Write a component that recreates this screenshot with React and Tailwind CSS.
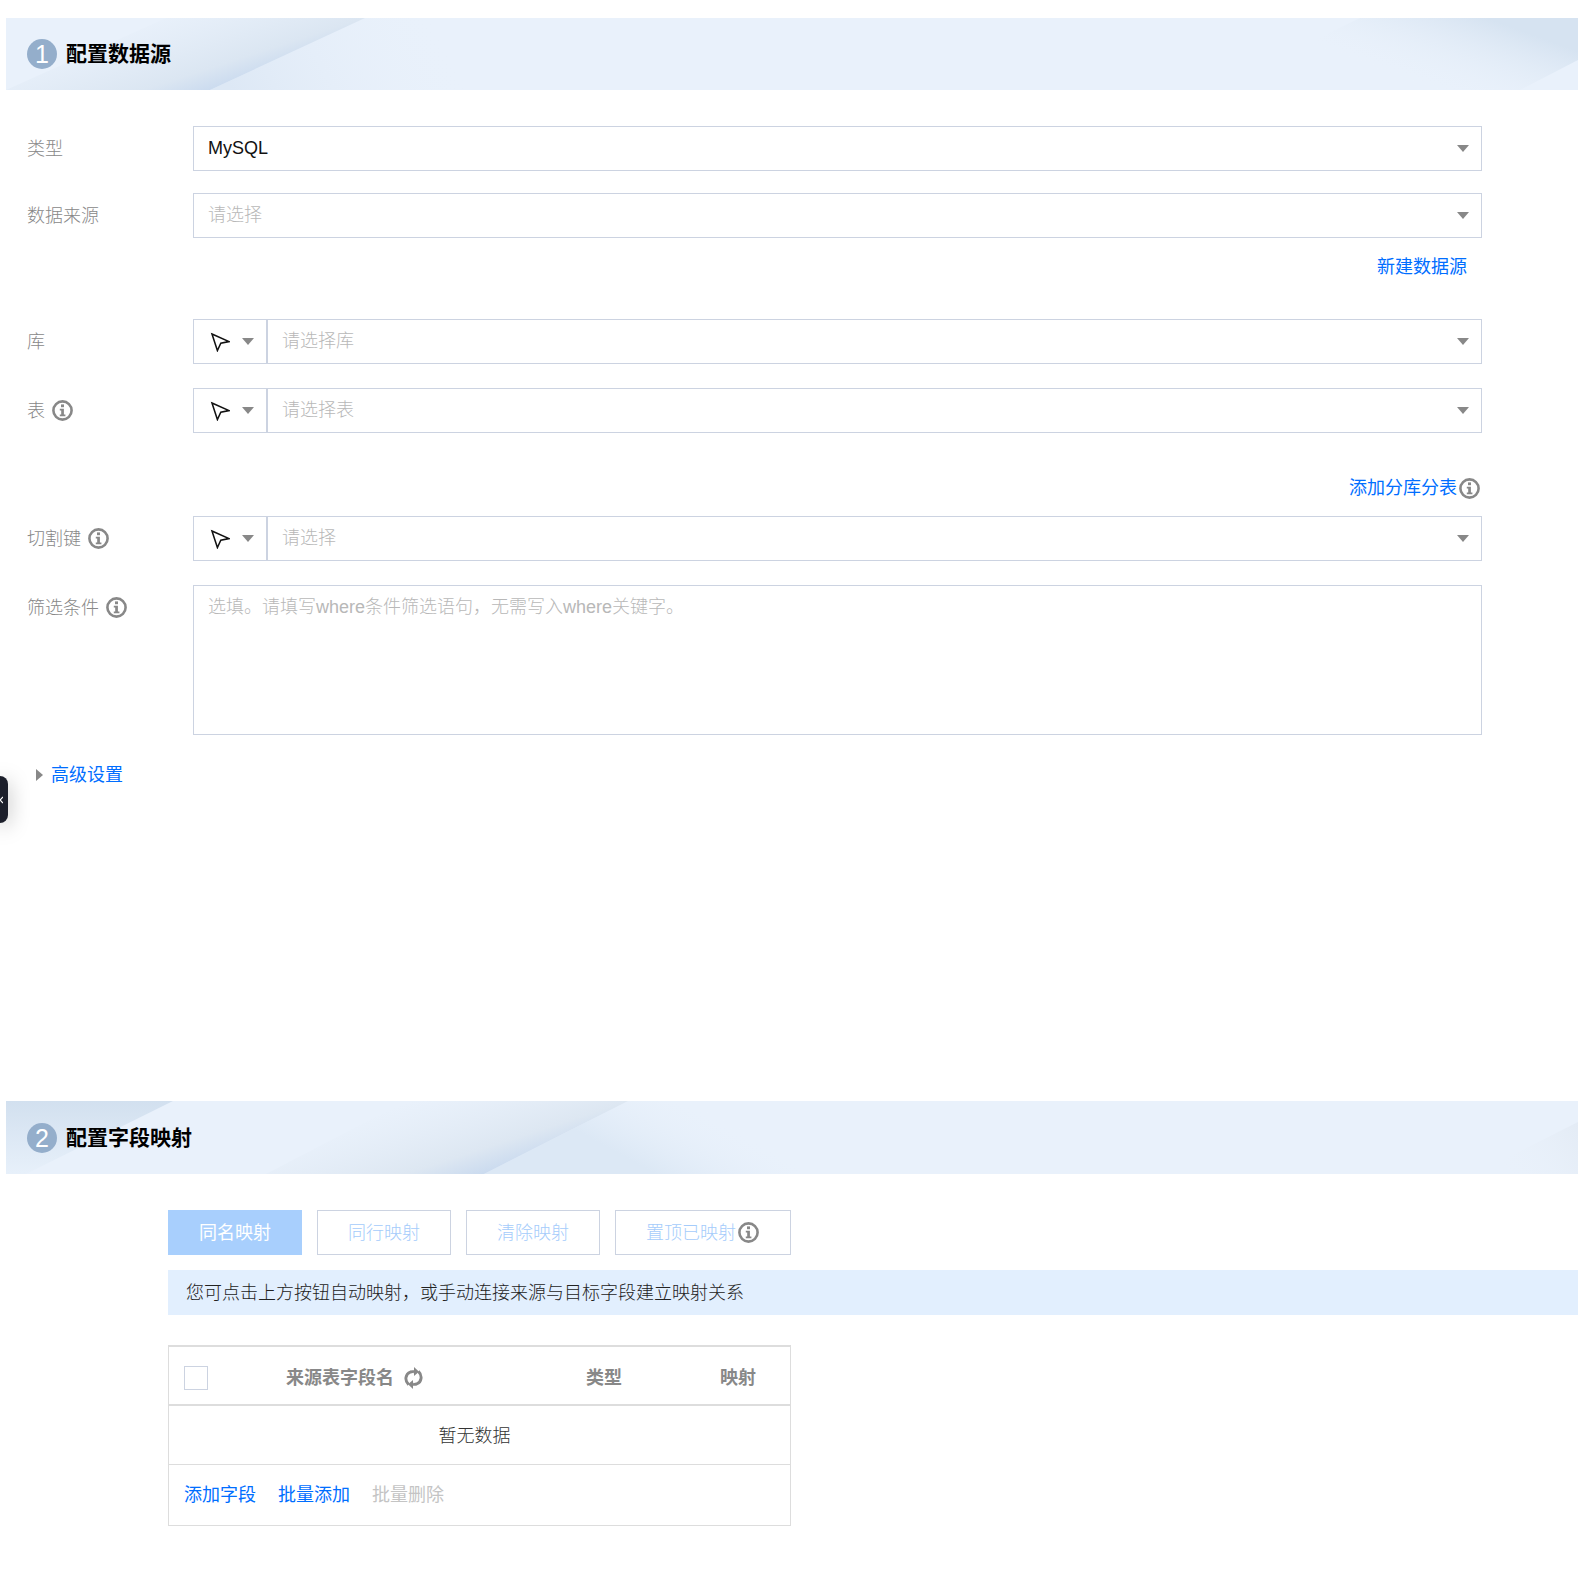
import React from "react";

function Caret({ className = "" }) {
  return (
    <svg width="12" height="7" viewBox="0 0 12 7" className={className}>
      <path d="M0 0H12L6 7Z" fill="#888888" />
    </svg>
  );
}

function Info() {
  return (
    <svg width="21" height="21" viewBox="0 0 21 21" className="shrink-0">
      <circle cx="10.5" cy="10.5" r="9.1" fill="none" stroke="#888888" strokeWidth="2.6" />
      <rect x="9" y="4.4" width="3" height="2.8" fill="#888888" />
      <path d="M7.8 8.8H11.9V14.6H13.4V16.2H7.8V14.6H9.2V10.4H7.8Z" fill="#888888" />
    </svg>
  );
}

function Pointer() {
  return (
    <svg width="20" height="20" viewBox="0 0 20 20" className="shrink-0">
      <path d="M2 2L19 9.6L10.8 11.2L7.4 18.6Z" fill="#ffffff" stroke="#111111" strokeWidth="1.5" strokeLinejoin="miter" />
    </svg>
  );
}

function Refresh() {
  return (
    <svg width="19" height="24" viewBox="0 0 19 24" className="shrink-0">
      <path d="M4.6 18.6C0.4 14.6 1.2 8 6.4 6C7.6 5.6 8.8 5.5 10 5.7" fill="none" stroke="#888888" strokeWidth="2.9" />
      <path d="M10 1L15 5.8L10 10Z" fill="#888888" />
      <path d="M14.4 5.4C18.6 9.4 17.8 16 12.6 18C11.4 18.4 10.2 18.5 9 18.3" fill="none" stroke="#888888" strokeWidth="2.9" />
      <path d="M9 14L4 18.2L9 23Z" fill="#888888" />
    </svg>
  );
}

function BannerOne() {
  return (
    <svg viewBox="0 0 1572 72" preserveAspectRatio="none" className="absolute inset-0 w-full h-full">
      <defs>
        <linearGradient id="a1" gradientUnits="userSpaceOnUse" x1="176" y1="-14" x2="204" y2="72">
          <stop offset="0" stopColor="#dfe9f4" stopOpacity="0" />
          <stop offset="0.77" stopColor="#dbe6f2" />
          <stop offset="1" stopColor="#cbdbef" />
        </linearGradient>
        <linearGradient id="a2" gradientUnits="userSpaceOnUse" x1="230" y1="80" x2="420" y2="-20">
          <stop offset="0" stopColor="#dde8f5" />
          <stop offset="1" stopColor="#e9f1fb" stopOpacity="0" />
        </linearGradient>
        <linearGradient id="a3" gradientUnits="userSpaceOnUse" x1="1440" y1="78" x2="1470" y2="-4">
          <stop offset="0" stopColor="#ebf2fb" stopOpacity="0" />
          <stop offset="1" stopColor="#d6e3f1" />
        </linearGradient>
      </defs>
      <path d="M204 72L359 0H700V72Z" fill="url(#a2)" />
      <path d="M0 72H204L359 0H160Z" fill="url(#a1)" />
      <path d="M1207 72L1354 0H1572V42L1514 72Z" fill="url(#a3)" />
    </svg>
  );
}

function BannerTwo() {
  return (
    <svg viewBox="0 0 1572 73" preserveAspectRatio="none" className="absolute inset-0 w-full h-full">
      <defs>
        <linearGradient id="b1" gradientUnits="userSpaceOnUse" x1="60" y1="0" x2="60" y2="72">
          <stop offset="0" stopColor="#d2e0ef" />
          <stop offset="1" stopColor="#e7f0fa" />
        </linearGradient>
        <linearGradient id="b2" gradientUnits="userSpaceOnUse" x1="450" y1="-14" x2="478" y2="72">
          <stop offset="0" stopColor="#e2ebf5" stopOpacity="0" />
          <stop offset="0.74" stopColor="#dde7f2" />
          <stop offset="1" stopColor="#cbdbef" />
        </linearGradient>
        <linearGradient id="b3" gradientUnits="userSpaceOnUse" x1="650" y1="73" x2="690" y2="0">
          <stop offset="0" stopColor="#dce8f5" />
          <stop offset="1" stopColor="#eaf2fc" stopOpacity="0" />
        </linearGradient>
        <linearGradient id="b4" gradientUnits="userSpaceOnUse" x1="1500" y1="73" x2="1572" y2="20">
          <stop offset="0" stopColor="#eaf1fa" stopOpacity="0" />
          <stop offset="1" stopColor="#e3ebf5" />
        </linearGradient>
      </defs>
      <path d="M478 73L622 0H920L786 73Z" fill="url(#b3)" />
      <path d="M0 0H167L20 73H0Z" fill="url(#b1)" />
      <path d="M260 73L400 0H622L478 73Z" fill="url(#b2)" />
      <path d="M1469 73L1572 21V73Z" fill="url(#b4)" />
    </svg>
  );
}

function Banner({ n, title, children, className = "" }) {
  return (
    <div className={`relative bg-[#e9f1fb] flex items-center pl-[21px] ${className}`}>
      {children}
      <span className="relative w-[30px] h-[30px] rounded-full bg-[#94aecb] text-white text-[25px] font-normal leading-[30px] text-center">{n}</span>
      <span className="relative ml-[9px] text-[21px] leading-[30px] font-bold text-black">{title}</span>
    </div>
  );
}

function Row({ label, info, className = "", children }) {
  return (
    <div className={`flex ${className}`}>
      <div className="w-[166px] h-[45px] flex items-center gap-[7px] text-[#888888]">
        <span className="pt-[1px]">{label}</span>
        {info && <Info />}
      </div>
      {children}
    </div>
  );
}

function Select({ value, placeholder }) {
  return (
    <div className="w-[1289px] h-[45px] border border-[#ccd3e1] flex items-center justify-between pl-[14px] pr-[12px]">
      {value ? <span className="text-[#111111] font-normal pb-[2px]">{value}</span> : <span className="text-[#b8b8b8] pb-[2px]">{placeholder}</span>}
      <Caret />
    </div>
  );
}

function PrefixSelect({ placeholder }) {
  return (
    <div className="w-[1289px] h-[45px] border border-[#ccd3e1] flex items-center">
      <div className="w-[74px] h-full flex items-center pl-[16px] gap-[12px] border-r-2 border-[#ccd3e1]">
        <Pointer />
        <Caret />
      </div>
      <div className="flex-1 flex items-center justify-between pl-[14px] pr-[12px]">
        <span className="text-[#b8b8b8] pb-[2px]">{placeholder}</span>
        <Caret />
      </div>
    </div>
  );
}

function OutlineButton({ children, className = "" }) {
  return (
    <div className={`h-[45px] border border-[#ccd3e1] text-[#a5ccfb] flex items-center justify-center ${className}`}>
      {children}
    </div>
  );
}

export default function App() {
  return (
    <div className="relative h-[1590px] overflow-hidden bg-white pl-[6px] pt-[18px] text-[18px] leading-[24px] font-light font-['Liberation_Sans','Noto_Sans_CJK_SC',sans-serif]">
      <Banner n="1" title="配置数据源" className="h-[72px]">
        <BannerOne />
      </Banner>

      <div className="pl-[21px]">
        <Row label="类型" className="mt-[36px]">
          <Select value="MySQL" />
        </Row>
        <Row label="数据来源" className="mt-[22px]">
          <Select placeholder="请选择" />
        </Row>
        <div className="w-[1455px] mt-[17px] pr-[15px] text-right font-normal text-[#006eff]">新建数据源</div>
        <Row label="库" className="mt-[40px]">
          <PrefixSelect placeholder="请选择库" />
        </Row>
        <Row label="表" info className="mt-[24px]">
          <PrefixSelect placeholder="请选择表" />
        </Row>
        <div className="w-[1453px] mt-[43px] flex justify-end items-center gap-[2px] font-normal text-[#006eff]">
          <span>添加分库分表</span>
          <Info />
        </div>
        <Row label="切割键" info className="mt-[16px]">
          <PrefixSelect placeholder="请选择" />
        </Row>
        <Row label="筛选条件" info className="mt-[24px]">
          <div className="w-[1289px] h-[150px] border border-[#ccd3e1] pl-[14px] pt-[9px] text-[#b8b8b8]">
            选填。请填写where条件筛选语句，无需写入where关键字。
          </div>
        </Row>
        <div className="mt-[28px] pl-[9px] flex items-center gap-[8px] font-normal text-[#006eff]">
          <svg width="7" height="12" viewBox="0 0 7 12">
            <path d="M0 0L7 6L0 12Z" fill="#888888" />
          </svg>
          <span>高级设置</span>
        </div>
      </div>

      <Banner n="2" title="配置字段映射" className="h-[73px] mt-[314px]">
        <BannerTwo />
      </Banner>

      <div className="pl-[162px]">
        <div className="mt-[36px] flex gap-[15px]">
          <div className="w-[134px] h-[45px] bg-[#a8cffd] text-white font-normal flex items-center justify-center">同名映射</div>
          <OutlineButton className="w-[134px]">同行映射</OutlineButton>
          <OutlineButton className="w-[134px]">清除映射</OutlineButton>
          <OutlineButton className="w-[176px] gap-[2px] pr-[1px]">
            <span>置顶已映射</span>
            <Info />
          </OutlineButton>
        </div>
        <div className="mt-[15px] h-[45px] bg-[#e2effe] pl-[18px] flex items-center text-[#222222]">
          您可点击上方按钮自动映射，或手动连接来源与目标字段建立映射关系
        </div>
        <div className="mt-[30px] w-[623px] border-x border-b border-t-2 border-[#dddddd]">
          <div className="h-[59px] pt-[4px] border-b-2 border-[#dddddd] flex items-center font-bold text-[#888888]">
            <div className="w-[117px] pl-[15px]">
              <div className="w-[24px] h-[24px] border border-[#ccd3e1]" />
            </div>
            <div className="w-[300px] flex items-center gap-[10px]">
              <span>来源表字段名</span>
              <Refresh />
            </div>
            <div className="w-[134px]">类型</div>
            <div>映射</div>
          </div>
          <div className="h-[59px] pt-[2px] border-b border-[#dddddd] flex items-center justify-center pr-[10px] text-[#333333]">暂无数据</div>
          <div className="h-[60px] pl-[15px] flex items-center gap-[22px] font-normal">
            <span className="text-[#006eff]">添加字段</span>
            <span className="text-[#006eff]">批量添加</span>
            <span className="text-[#c4c4c4]">批量删除</span>
          </div>
        </div>
      </div>

      <div className="absolute left-0 top-[776px] w-[8px] h-[47px] bg-[#1c1f2b] rounded-r-[8px] shadow-[0_4px_20px_rgba(0,0,0,0.35)] flex items-center">
        <svg width="3" height="8" viewBox="0 0 3 8">
          <path d="M3 1L0 4L3 7" fill="none" stroke="#ffffff" strokeWidth="1.2" />
        </svg>
      </div>
    </div>
  );
}
